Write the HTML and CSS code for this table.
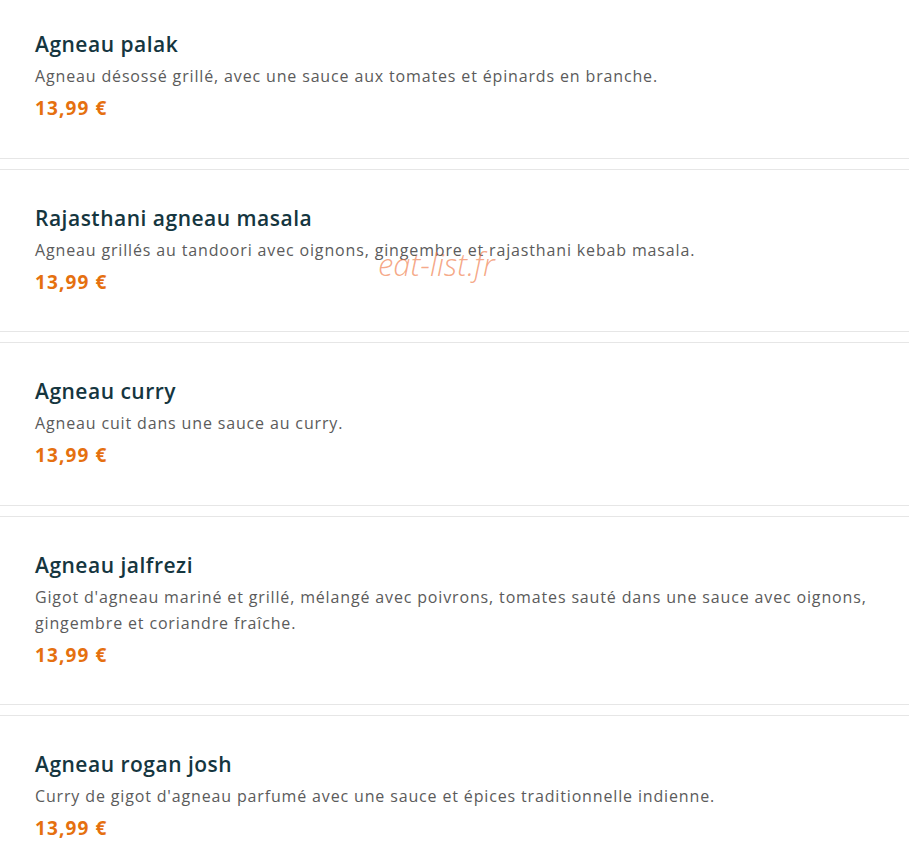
FILE: index.html
```html
<!DOCTYPE html>
<html lang="fr">
<head>
    <meta charset="UTF-8">
    <meta name="viewport" content="width=device-width, initial-scale=1.0">
    <title>Agneau - Menu</title>
    <link rel="stylesheet" href="styles.css">
</head>

<body>
    <div class="menu">
        <div class="dish">
            <h3 class="dish-name">Agneau palak</h3>
            <p class="dish-desc">Agneau désossé grillé, avec une sauce aux tomates et épinards en branche.</p>
            <p class="dish-price">13,99 €</p>
        </div>
        <div class="dish">
            <h3 class="dish-name">Rajasthani agneau masala</h3>
            <p class="dish-desc">Agneau grillés au tandoori avec oignons, gingembre et rajasthani kebab masala.</p>
            <p class="dish-price">13,99 €</p>
        </div>
        <div class="dish">
            <h3 class="dish-name">Agneau curry</h3>
            <p class="dish-desc">Agneau cuit dans une sauce au curry.</p>
            <p class="dish-price">13,99 €</p>
        </div>
        <div class="dish">
            <h3 class="dish-name">Agneau jalfrezi</h3>
            <p class="dish-desc">Gigot d'agneau mariné et grillé, mélangé avec poivrons, tomates sauté dans une sauce avec oignons, gingembre et coriandre fraîche.</p>
            <p class="dish-price">13,99 €</p>
        </div>
        <div class="dish">
            <h3 class="dish-name">Agneau rogan josh</h3>
            <p class="dish-desc">Curry de gigot d'agneau parfumé avec une sauce et épices traditionnelle indienne.</p>
            <p class="dish-price">13,99 €</p>
        </div>
    </div>

    <span class="watermark">eat-list.fr</span>
</body>
</html>
```

FILE: styles.css
```css
* {
    margin: 0;
    padding: 0;
    box-sizing: border-box;
}

body {
    background: #fff;
    font-family: "Open Sans", Arial, sans-serif;
    position: relative;
    overflow: hidden;
}

.menu {
    display: flex;
    flex-direction: column;
    gap: 10px;
    margin-top: -5px;
}

.dish {
    border-top: 1px solid #e6e6e6;
    border-bottom: 1px solid #e6e6e6;
    padding: 36px 35px 37.6px 35px;
}

.dish-name {
    font-size: 21px;
    line-height: 24px;
    font-weight: 600;
    letter-spacing: 0.5px;
    color: #15363f;
}

.dish-desc {
    margin-top: 7px;
    font-size: 16px;
    line-height: 26px;
    letter-spacing: 0.85px;
    color: #5b5b5b;
}

.dish-price {
    margin-top: 7px;
    font-size: 19px;
    line-height: 24px;
    font-weight: 700;
    letter-spacing: 1.1px;
    color: #e5700f;
}

.watermark {
    position: absolute;
    left: 378px;
    top: 243px;
    font-size: 31px;
    font-style: italic;
    font-weight: 300;
    color: rgba(240, 120, 70, 0.65);
    pointer-events: none;
}
```
